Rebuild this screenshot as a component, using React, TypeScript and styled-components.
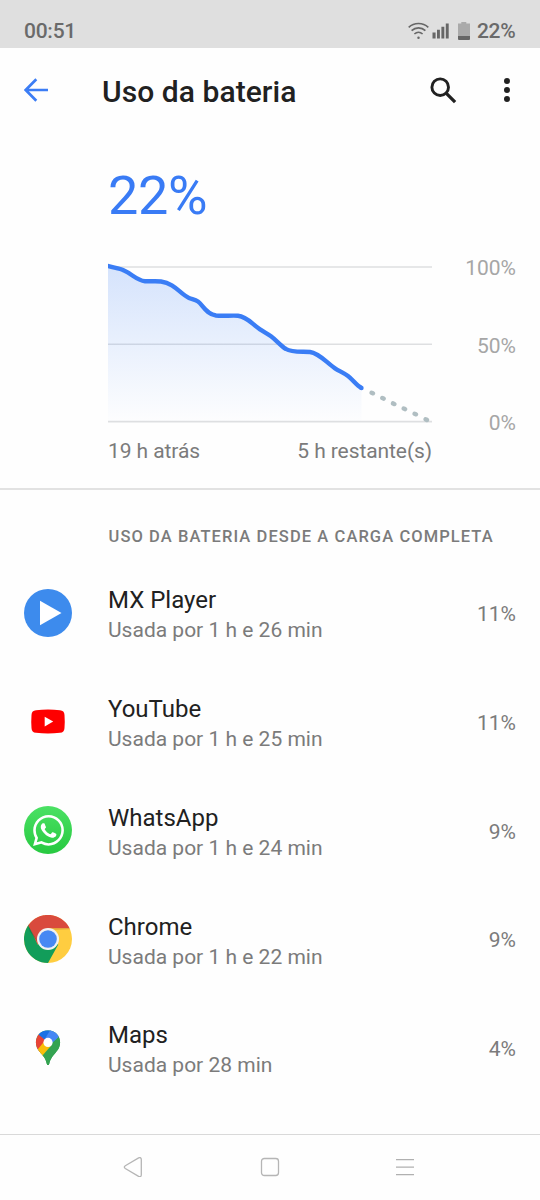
import React from 'react';
import styled, { createGlobalStyle } from 'styled-components';
import { SiWhatsapp } from 'react-icons/si';

const GlobalStyle = createGlobalStyle`
  *, *::before, *::after { box-sizing: border-box; }
  body { margin: 0; background: #fefefe; font-family: Roboto, sans-serif; }
  svg { display: block; flex: none; }
`;

const Screen = styled.div`
  width: 540px;
  height: 1200px;
  display: flex;
  flex-direction: column;
  overflow: hidden;
  background: #fefefe;
`;

const StatusBar = styled.header`
  height: 48px;
  flex: none;
  display: flex;
  justify-content: space-between;
  align-items: center;
  padding: 14px 24px 0;
  background: #dfdfdf;
  color: #6a6a6a;
  font-size: 21px;
  line-height: 34px;
  font-weight: 500;
  letter-spacing: -0.25px;
`;

const StatusIcons = styled.div`
  display: flex;
  align-items: center;
`;

const SignalGroup = styled.div`
  display: flex;
  align-items: center;
  gap: 3px;
  margin: -1px 8px 0 0;
`;

const BatteryLevel = styled.span`
  margin-left: 6.5px;
  margin-right: 0.5px;
`;

const Toolbar = styled.div`
  height: 84px;
  flex: none;
  display: flex;
  align-items: center;
  padding: 0 30px 0 24px;
`;

const Title = styled.h1`
  flex: 1;
  margin: 3px 0 0 54px;
  font-size: 30px;
  line-height: 40px;
  font-weight: 500;
  letter-spacing: 0.06px;
  color: #212121;
`;

const IconButton = styled.button<{ $gap?: number }>`
  margin: 0 0 0 ${({ $gap = 0 }) => $gap}px;
  padding: 0;
  border: 0;
  background: none;
`;

const Summary = styled.section`
  height: 358px;
  flex: none;
  padding: 32px 24px 0 108px;
  border-bottom: 2px solid #e2e2e2;
`;

const Percentage = styled.div`
  font-size: 54px;
  line-height: 64px;
  height: 92px;
  letter-spacing: -0.4px;
  color: #397bf5;
`;

const ChartRow = styled.div`
  display: flex;
  justify-content: space-between;
  height: 176px;
`;

const AxisLabels = styled.div`
  height: 178px;
  padding-top: 1px;
  display: flex;
  flex-direction: column;
  justify-content: space-between;
  text-align: right;
  color: #a6a6a6;
  font-size: 21px;
  line-height: 22px;
`;

const TimeLabels = styled.div`
  width: 324px;
  margin-top: 7px;
  display: flex;
  justify-content: space-between;
  color: #7b7b7b;
  font-size: 21px;
  line-height: 24px;
  letter-spacing: -0.08px;
`;

const Usage = styled.main`
  flex: 1;
  padding: 34px 24px 0;
`;

const SectionTitle = styled.h2`
  margin: 0 0 9.6px 84.5px;
  height: 25px;
  font-size: 16.5px;
  line-height: 26px;
  font-weight: 500;
  letter-spacing: 1.08px;
  color: #7b7b7b;
  white-space: nowrap;
`;

const AppRow = styled.div`
  height: 108.75px;
  display: flex;
  align-items: center;
`;

const AppText = styled.div`
  flex: 1;
  margin-left: 36px;
  padding-top: 5px;
`;

const AppName = styled.div`
  font-size: 24px;
  line-height: 31px;
  color: #212121;
`;

const AppDetail = styled.div`
  font-size: 21px;
  line-height: 29px;
  color: #7b7b7b;
`;

const AppShare = styled.div`
  padding-top: 2.5px;
  font-size: 21px;
  line-height: 28px;
  color: #7b7b7b;
`;

const WhatsAppBadge = styled.span`
  width: 48px;
  height: 48px;
  display: grid;
  place-items: center;
  border-radius: 50%;
  background: linear-gradient(#4be164, #27c940);
  color: #fff;
`;

const NavBar = styled.nav`
  height: 66px;
  flex: none;
  display: flex;
  align-items: center;
  justify-content: space-between;
  padding: 0 126px 1px 123px;
  border-top: 1.5px solid #d9d9d9;
`;

const WifiIcon = () => (
  <svg width="21" height="18" viewBox="0 0 21 18" fill="none" stroke="#686868" strokeWidth="1.6">
    <path d="M.7 5.3C6.2.2 14.8.2 20.3 5.3M3.6 8.6c3.9-3.7 9.9-3.7 13.8 0M6.4 12c2.4-2.2 5.8-2.2 8.2 0" />
    <circle cx="10.5" cy="15.7" r="1.25" fill="#686868" stroke="none" />
  </svg>
);

const SignalIcon = () => (
  <svg width="18" height="18" viewBox="0 0 18 18" fill="#666">
    <path d="M.5 10.5h3.1v6H.5zM5 7.8h2.9v8.7H5zM9.4 4.8h2.9v11.7H9.4zM13.8 1.5h2.9v15h-2.9z" />
  </svg>
);

const BatteryIcon = () => (
  <svg width="12" height="18" viewBox="0 0 12 18">
    <path d="M3.3 0h5v1.6H12V14H0V1.6h3.3z" fill="#aaa" />
    <path d="M0 14h12v3q0 1-1 1H1q-1 0-1-1z" fill="#666" />
  </svg>
);

const BackIcon = () => (
  <svg width="24" height="24" viewBox="0 0 24 24" fill="none" stroke="#3c7df5" strokeWidth="2.7">
    <path d="M24 12H2M12.3 1.2 1.7 12l10.6 10.8" />
  </svg>
);

const SearchIcon = () => (
  <svg width="27" height="27" viewBox="0 0 27 27" fill="none" stroke="#212121">
    <circle cx="10.2" cy="10.2" r="8.3" strokeWidth="2.9" />
    <path d="m16.1 16.1 9 9" strokeWidth="3.3" />
  </svg>
);

const MoreIcon = () => (
  <svg width="6" height="24" viewBox="0 0 6 24" fill="#212121">
    <circle cx="3" cy="3" r="3" />
    <circle cx="3" cy="12" r="3" />
    <circle cx="3" cy="21" r="3" />
  </svg>
);

const CURVE =
  'M-2 9.4C4 11.7 11 12 16 14.5C24 18 29 24.5 37 25.2C43 25.6 47 24.8 53 25.5C67 27.5 72 38 81 42C84 43.3 87 43.5 90 45.5C95 49 98 58 108 59.5C115 60.3 123 59.2 130 59.7C139 60.5 144 68 152 73.3C156 76 159 77.4 163 80.3C169 84.8 173 90 178 93C184 97 196 95.2 202 96C211 97 219 107 227 112.3C231 115 236 117 240 120C245 123.8 248 129 253.5 132';

const DOTS = [[264.3, 137], [275, 142.3], [285.7, 147.7], [296.4, 152.8], [307.3, 158], [318.3, 163.6]];

const BatteryChart = () => (
  <svg width="324" height="176" viewBox="0 0 324 176" fill="none">
    <defs>
      <linearGradient id="charge" x1="0" y1="10" x2="0" y2="166" gradientUnits="userSpaceOnUse">
        <stop stopColor="#3a7df5" stopOpacity=".21" />
        <stop offset="1" stopColor="#3a7df5" stopOpacity=".005" />
      </linearGradient>
    </defs>
    <path d="M0 11h324M0 88.3h324M0 165.6h324" stroke="#dedfe1" strokeWidth="1.6" />
    <path d={`${CURVE}V165.5H-2Z`} fill="url(#charge)" />
    <path d={CURVE} stroke="#3a7df5" strokeWidth="4.4" />
    <circle cx="253.5" cy="132" r="2.2" fill="#3a7df5" />
    {DOTS.map(([x, y]) => (
      <ellipse key={x} cx={x} cy={y} rx="3" ry="2.3" fill="#b0bec2" transform={`rotate(26 ${x} ${y})`} />
    ))}
  </svg>
);

const MxPlayerIcon = () => (
  <svg width="48" height="48" viewBox="0 0 48 48">
    <circle cx="24" cy="24" r="24" fill="#3d8bed" />
    <path d="M16 11.8 37.5 24 16 36.3z" fill="#fff" />
  </svg>
);

const YouTubeIcon = () => (
  <svg width="48" height="48" viewBox="0 0 48 48">
    <path d="M12 12.2q12-1.2 24 0 4.3.3 4.5 4.8.5 6.5 0 13-.2 4.5-4.5 4.8-12 1.2-24 0-4.3-.3-4.5-4.8-.5-6.5 0-13 .2-4.5 4.5-4.8z" fill="#fe0000" />
    <path d="M20.7 18.7 29.2 23.5l-8.5 4.9z" fill="#fff" />
  </svg>
);

const WhatsAppIcon = () => (
  <WhatsAppBadge>
    <SiWhatsapp size={31} />
  </WhatsAppBadge>
);

const ChromeIcon = () => (
  <svg width="48" height="48" viewBox="0 0 48 48">
    <circle cx="24" cy="24" r="24" fill="#ffcd40" />
    <path d="M4.8 9.6A24 24 0 0 0 24 48L34.3 29.5 24 24 13.7 29.5z" fill="#129d5a" />
    <path d="M4.2 10.4A24 24 0 0 1 45.6 13.3H24L13.7 29.5z" fill="#d94a3d" />
    <path d="M24 13.3h21.6l.4.9-14 .9z" fill="#bd8f38" opacity=".4" />
    <path d="M13.3 26.2 4.4 11l1.4 5.4z" fill="#0b6c40" opacity=".5" />
    <circle cx="24" cy="24" r="11" fill="#f2f2f2" />
    <circle cx="24" cy="24" r="8.8" fill="#4788f3" />
  </svg>
);

const MapsIcon = () => (
  <svg width="48" height="48" viewBox="0 0 48 48">
    <defs>
      <clipPath id="pin">
        <path d="M24 7c-7 0-12.1 5.5-12.1 12.1 0 5.7 3 8.7 6 12.2 2.4 2.9 4 5.3 4.7 8.4.3 1.5.5 2.1 1.4 2.1s1.1-.6 1.4-2.1c.7-3.1 2.3-5.5 4.7-8.4 3-3.5 6-6.5 6-12.2C36.1 12.5 31 7 24 7z" />
      </clipPath>
    </defs>
    <g transform="translate(0 -.8)">
      <g clipPath="url(#pin)">
        <path d="M10 5h28v40H10z" fill="#34a351" />
        <path d="M10 10h5l9 9.2-8.7 10L10 29z" fill="#e84436" />
        <path d="M13.8 26 20 18.5l8 4.7-10.3 12.3z" fill="#fabe0a" />
        <path d="M10 5h17.5L24 19l-9.3-7.5z" fill="#1b72e5" />
        <path d="M27.5 5H36v8L24 23l-4-6z" fill="#4487f4" />
        <path d="M38 10 17 34l8 11 15-13z" fill="#34a351" />
      </g>
      <circle cx="24" cy="19.2" r="4.6" fill="#fff" />
    </g>
  </svg>
);

const NavBackIcon = () => (
  <svg width="20" height="20" viewBox="0 0 20 20" fill="none" stroke="#b5b5b5" strokeWidth="1.3">
    <path d="M2.3 8.7 15.6.9q2.7-1 2.7 1.7v15.2q0 2.7-2.7 1.5L2.3 11.5q-2-1.4 0-2.8z" />
  </svg>
);

const NavHomeIcon = () => (
  <svg width="20" height="20" viewBox="0 0 20 20" fill="none" stroke="#b5b5b5" strokeWidth="1.3">
    <rect x="1.5" y="1.5" width="17" height="17" rx="2.8" />
  </svg>
);

const NavRecentsIcon = () => (
  <svg width="18" height="18" viewBox="0 0 18 18" fill="none" stroke="#b0b0b0" strokeWidth="1.3">
    <path d="M0 1.7h18M0 9.2h18M0 16.7h18" />
  </svg>
);

const APPS = [
  { name: 'MX Player', time: '1 h e 26 min', share: '11%', Icon: MxPlayerIcon },
  { name: 'YouTube', time: '1 h e 25 min', share: '11%', Icon: YouTubeIcon },
  { name: 'WhatsApp', time: '1 h e 24 min', share: '9%', Icon: WhatsAppIcon },
  { name: 'Chrome', time: '1 h e 22 min', share: '9%', Icon: ChromeIcon },
  { name: 'Maps', time: '28 min', share: '4%', Icon: MapsIcon },
];

export default function App() {
  return (
    <Screen>
      <GlobalStyle />
      <StatusBar>
        <span>00:51</span>
        <StatusIcons>
          <SignalGroup>
            <WifiIcon />
            <SignalIcon />
          </SignalGroup>
          <BatteryIcon />
          <BatteryLevel>22%</BatteryLevel>
        </StatusIcons>
      </StatusBar>
      <Toolbar>
        <IconButton aria-label="Voltar"><BackIcon /></IconButton>
        <Title>Uso da bateria</Title>
        <IconButton aria-label="Pesquisar"><SearchIcon /></IconButton>
        <IconButton $gap={47} aria-label="Mais opções"><MoreIcon /></IconButton>
      </Toolbar>
      <Summary>
        <Percentage>22%</Percentage>
        <ChartRow>
          <BatteryChart />
          <AxisLabels>
            <span>100%</span>
            <span>50%</span>
            <span>0%</span>
          </AxisLabels>
        </ChartRow>
        <TimeLabels>
          <span>19 h atrás</span>
          <span>5 h restante(s)</span>
        </TimeLabels>
      </Summary>
      <Usage>
        <SectionTitle>USO DA BATERIA DESDE A CARGA COMPLETA</SectionTitle>
        {APPS.map(({ name, time, share, Icon }) => (
          <AppRow key={name}>
            <Icon />
            <AppText>
              <AppName>{name}</AppName>
              <AppDetail>Usada por {time}</AppDetail>
            </AppText>
            <AppShare>{share}</AppShare>
          </AppRow>
        ))}
      </Usage>
      <NavBar>
        <NavBackIcon />
        <NavHomeIcon />
        <NavRecentsIcon />
      </NavBar>
    </Screen>
  );
}
